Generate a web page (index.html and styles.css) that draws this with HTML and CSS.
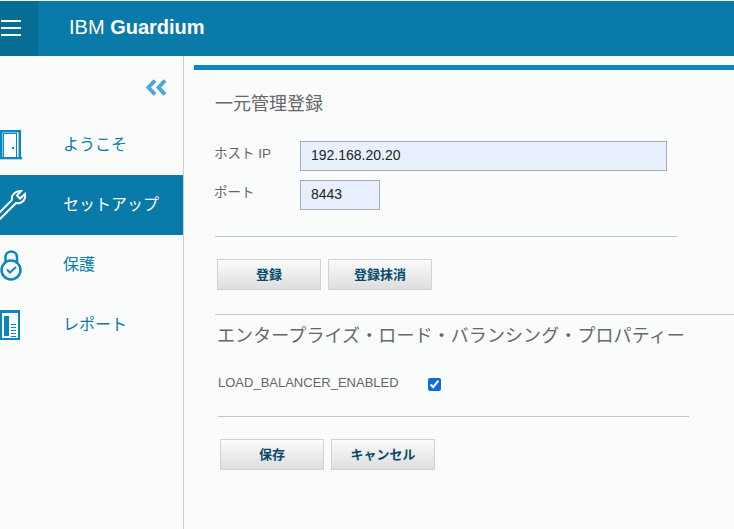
FILE: index.html
```html
<!DOCTYPE html>
<html lang="ja">
<head>
<meta charset="utf-8">
<title>IBM Guardium</title>
<link rel="stylesheet" href="styles.css">
</head>
<body>
<div class="app">
  <header class="topbar">
    <div class="menu-btn">
      <svg width="22" height="16" viewBox="0 0 22 16"><path d="M1 1h20M1 8h20M1 15h20" stroke="#fff" stroke-width="2" fill="none"/></svg>
    </div>
    <div class="brand">IBM <b>Guardium</b></div>
  </header>
  <div class="body">
    <aside class="sidebar">
      <div class="collapse">
        <svg width="21" height="17" viewBox="0 0 21 17"><path d="M9 1.500 2.500 8.500l6.500 7M19 1.500l-6.500 7 6.500 7" stroke="#4fa6d3" stroke-width="4" fill="none"/></svg>
      </div>
      <nav class="nav">
        <a class="nav-item">
          <span class="nav-icon">
            <svg width="22" height="30" viewBox="0 0 22 30"><path d="M1.200 28V1.200h18.600V28" fill="none" stroke="#0d86be" stroke-width="2.500"/><rect y="27" width="22" height="2.300" fill="#0d86be"/><rect x="3.500" y="3.500" width="13" height="24" fill="none" stroke="#0d86be"/><rect x="12" y="17" width="2" height="2" fill="#0d86be"/></svg>
          </span>
          <span class="nav-text">ようこそ</span>
        </a>
        <a class="nav-item active">
          <span class="nav-icon">
            <svg width="27" height="30" viewBox="0 0 27 30"><path d="M-1 23 12 10C11 5 15 1 21 1l-4 4.500L20 8.500l5-4.500C26 9 23 14 16 13L-1 30" fill="none" stroke="#fff" stroke-width="2"/></svg>
          </span>
          <span class="nav-text">セットアップ</span>
        </a>
        <a class="nav-item">
          <span class="nav-icon">
            <svg width="23" height="31" viewBox="0 0 23 31"><path d="M5.500 12V6.500a5.800 5.800 0 0 1 11.500 0V12" fill="none" stroke="#0d86be" stroke-width="2.500"/><circle cx="11" cy="20" r="9.500" fill="none" stroke="#0d86be" stroke-width="2.500"/><path d="M7 19.500l3 3 6-5.500" fill="none" stroke="#0d86be" stroke-width="2"/></svg>
          </span>
          <span class="nav-text">保護</span>
        </a>
        <a class="nav-item">
          <span class="nav-icon">
            <svg width="20" height="30" viewBox="0 0 20 30"><rect width="20" height="30" fill="#0d86be"/><rect x="2" y="3" width="16" height="25" fill="#fafcfc"/><rect x="4" y="6" width="5" height="20" fill="#0d86be"/><path d="M11 14.500h5M11 17.500h5M11 20.500h5M11 23.500h5M11 26.500h5" stroke="#0d86be"/></svg>
          </span>
          <span class="nav-text">レポート</span>
        </a>
      </nav>
    </aside>
    <main class="main">
      <div class="panel">
        <section class="section-a">
          <h2 class="title">一元管理登録</h2>
          <div class="field">
            <label class="field-label">ホスト IP</label>
            <input class="input input-wide" type="text" value="192.168.20.20">
          </div>
          <div class="field">
            <label class="field-label">ポート</label>
            <input class="input input-narrow" type="text" value="8443">
          </div>
          <hr class="rule rule-a">
          <div class="buttons">
            <button class="btn">登録</button>
            <button class="btn">登録抹消</button>
          </div>
        </section>
        <hr class="divider">
        <section class="section-b">
          <h2 class="title title-b">エンタープライズ・ロード・バランシング・プロパティー</h2>
          <div class="check-row">
            <label class="check-label">LOAD_BALANCER_ENABLED</label>
            <input class="check" type="checkbox" checked>
          </div>
          <hr class="rule rule-b">
          <div class="buttons">
            <button class="btn">保存</button>
            <button class="btn">キャンセル</button>
          </div>
        </section>
      </div>
    </main>
  </div>
</div>
</body>
</html>
```
FILE: styles.css
```css
* { box-sizing: border-box; }
html, body { margin: 0; height: 100%; }
body {
  background: #fafcfc;
  font-family: "Liberation Sans", "Noto Sans CJK JP", sans-serif;
  overflow: hidden;
}
.app { display: flex; flex-direction: column; height: 529px; padding-top: 1px; }
.topbar { display: flex; align-items: stretch; height: 55px; background: #0a7aa9; color: #fff; flex: none; }
.menu-btn { width: 38px; background: #066d94; display: flex; align-items: center; padding-bottom: 1px; }
.brand { margin-left: 31px; font-size: 20px; line-height: 52px; }
.brand b { font-weight: 700; }
.body { display: flex; flex: 1; min-height: 0; }
.sidebar { width: 184px; border-right: 1px solid #c9cccd; flex: none; padding-top: 23px; }
.collapse { display: flex; justify-content: flex-end; padding-right: 16px; height: 36px; }
.nav { display: flex; flex-direction: column; }
.nav-item { display: flex; align-items: center; height: 60px; color: #0a7aa9; font-size: 16px; }
.nav-item.active { background: #0a7aa9; color: #fff; }
.nav-icon { width: 63px; display: flex; align-items: center; flex: none; }
.nav-icon svg { display: block; }
.nav-text { padding-bottom: 5px; }
.main { flex: 1; min-width: 0; padding: 9px 0 0 10px; }
.panel { border-top: 5px solid #0a86c2; }
.section-a { padding: 0 0 0 21px; }
.title { margin: 0; font-size: 18px; line-height: 26px; font-weight: 400; color: #666; }
.section-a .title { padding-top: 21px; margin-bottom: 24px; }
.field { display: flex; height: 30px; margin-bottom: 9px; align-items: flex-start; }
.field-label { width: 85px; font-size: 13.5px; line-height: 26px; color: #666; margin-left: -1px; }
.input { height: 30px; border: 1px solid #a9acb4; background: #e8f0fe; padding: 0 10px 2px; font-size: 14px; font-family: inherit; color: #222; border-radius: 0; outline: 0; margin-left: 1px; }
.input-wide { width: 367px; }
.input-narrow { width: 80px; }
.rule { height: 1px; border: 0; background: #bcc3d2; margin: 0; }
.rule-a { width: 462px; margin-top: 26px; }
.buttons { display: flex; gap: 7px; padding: 22px 0 0 2px; }
.btn { width: 104px; height: 31px; border: 1px solid #cfd2d3; background: linear-gradient(#fbfbfb, #dedede); color: #064a6b; font-size: 13px; font-weight: 700; font-family: inherit; padding: 0 0 3px; border-radius: 0; }
.divider { height: 1px; border: 0; background: #bcc3d2; margin: 24px 0 0 21px; }
.section-b { padding-left: 24px; }
.title-b { margin: 8px 0 0 -1px; letter-spacing: .1px; }
.check-row { display: flex; align-items: center; height: 20px; margin-top: 25px; }
.check-label { width: 210px; font-size: 13px; color: #666; padding-bottom: 4px; }
.check { width: 13px; height: 13px; margin: 0; accent-color: #0b6fd6; }
.rule-b { width: 471px; margin-top: 22px; }
.section-b .buttons { padding-top: 22px; }
```
